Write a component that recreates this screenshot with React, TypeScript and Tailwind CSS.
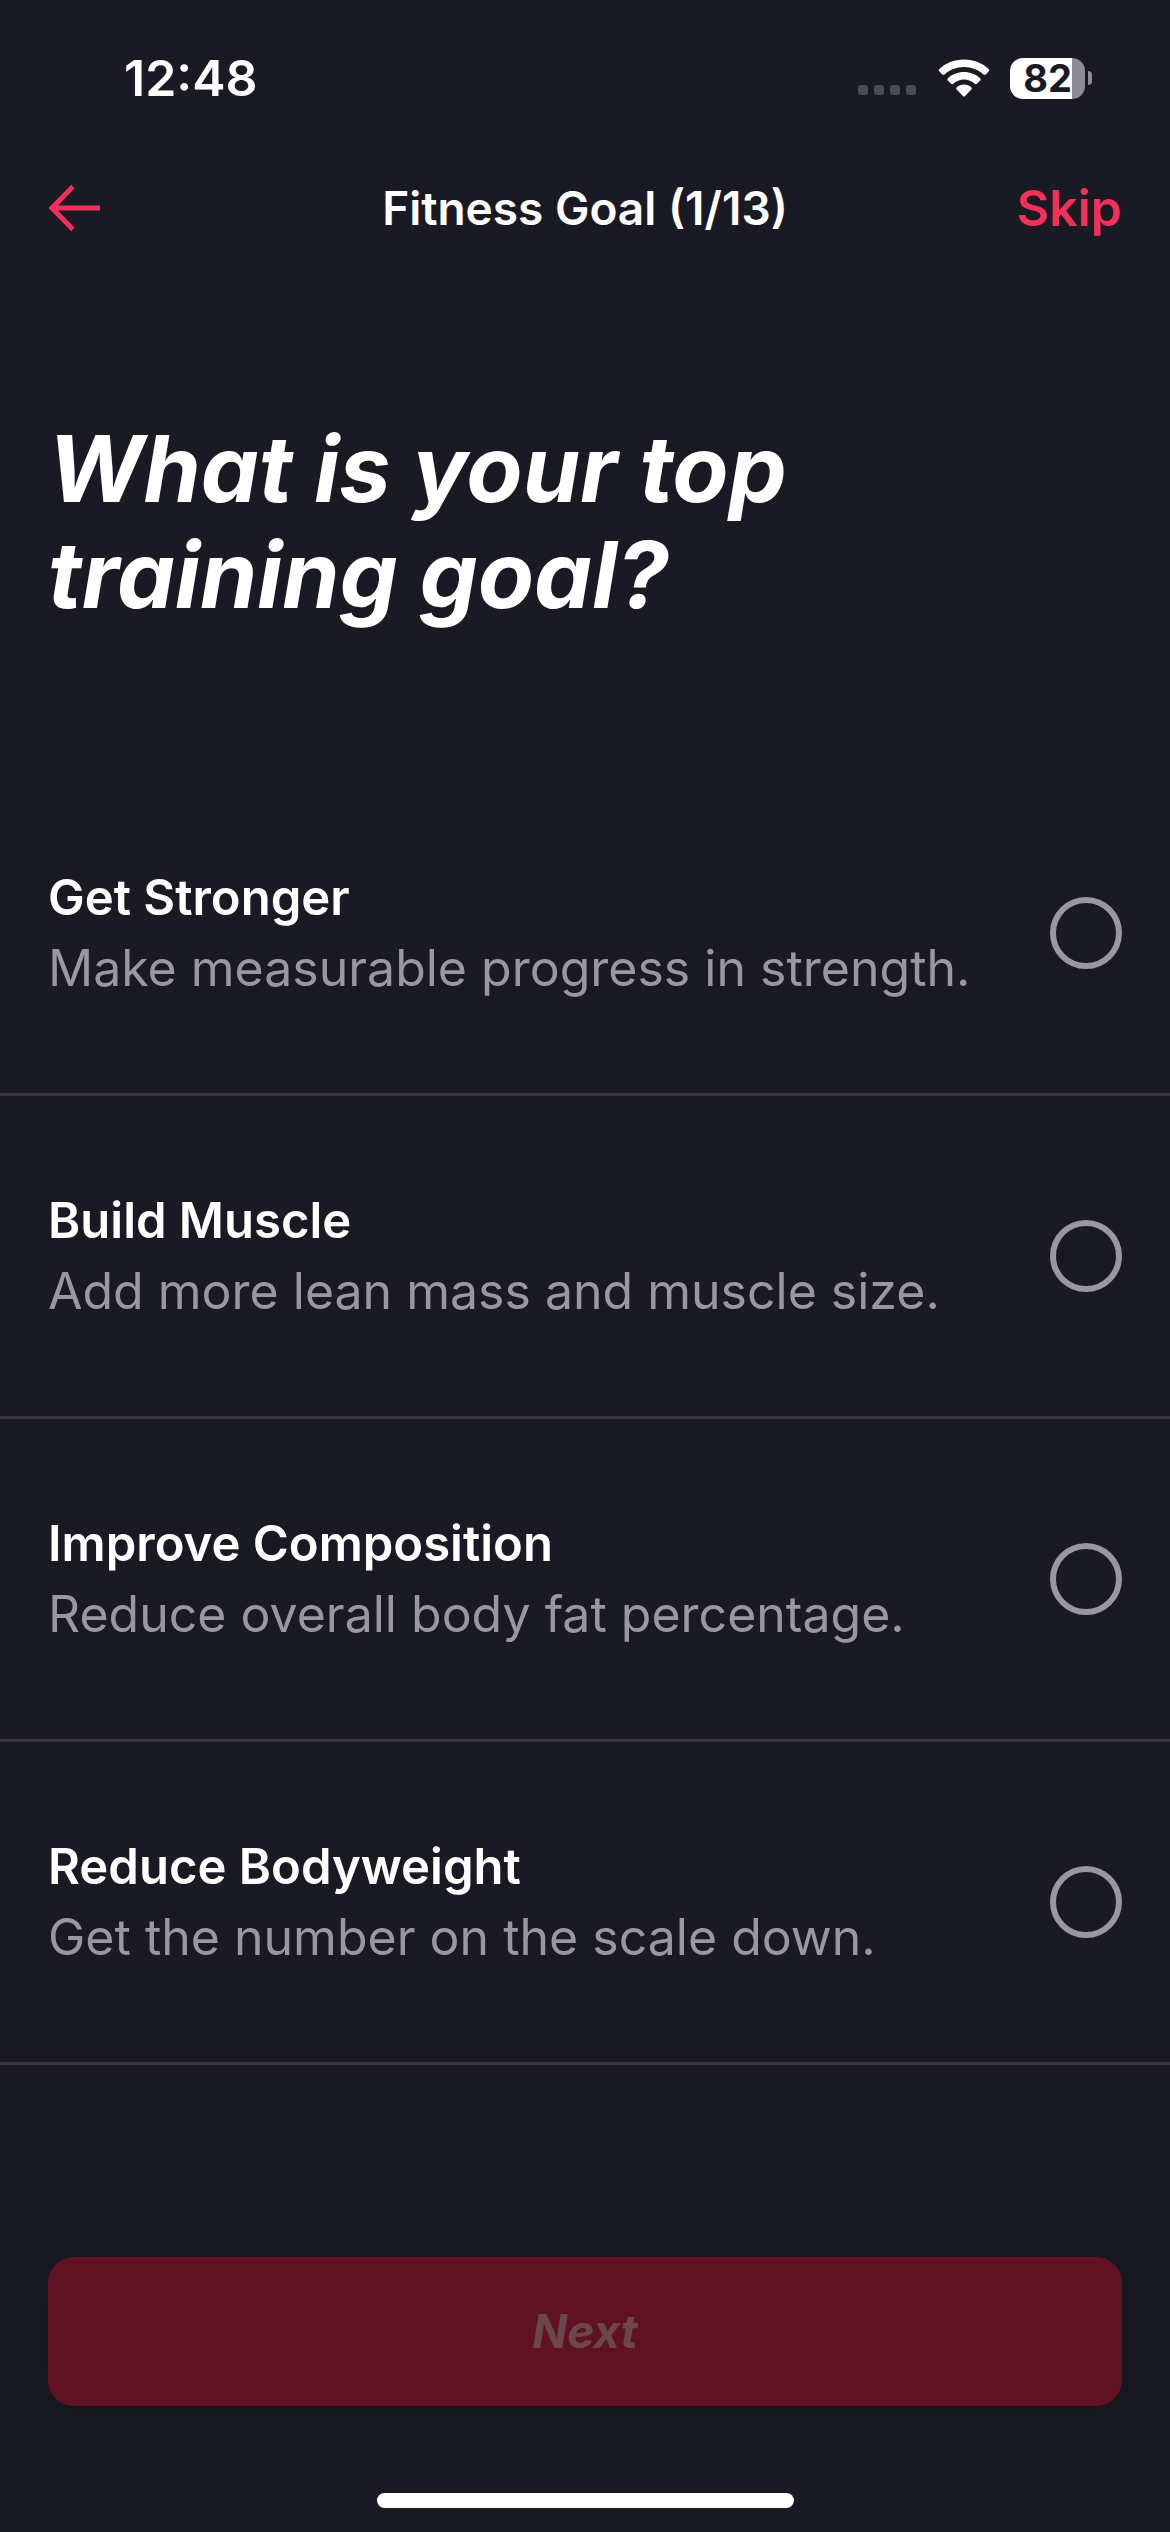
import { useState } from "react";

const GOALS = [
  { id: "strength", title: "Get Stronger", description: "Make measurable progress in strength." },
  { id: "muscle", title: "Build Muscle", description: "Add more lean mass and muscle size." },
  { id: "composition", title: "Improve Composition", description: "Reduce overall body fat percentage." },
  { id: "weight", title: "Reduce Bodyweight", description: "Get the number on the scale down." },
];

function StatusBar() {
  return (
    <div className="flex h-39 items-center justify-between pl-31 pr-[78px] text-white">
      <span className="text-[50px] leading-none font-semibold">12:48</span>
      <div className="flex items-center">
        <div className="flex gap-1.5 pt-6" aria-hidden="true">
          <span className="size-2.5 rounded-[3px] bg-[#4a4a52]" />
          <span className="size-2.5 rounded-[3px] bg-[#4a4a52]" />
          <span className="size-2.5 rounded-[3px] bg-[#4a4a52]" />
          <span className="size-2.5 rounded-[3px] bg-[#4a4a52]" />
        </div>
        <svg className="ml-5.5" width="52" height="38" viewBox="0 0 52 38" fill="none" aria-hidden="true">
          <path
            d="M26 .5C36 .5 44.500 4.200 50.700 10c.7.700.7 1.600.1 2.300l-3.100 3.200c-.6.6-1.500.6-2.200 0C40.200 10.800 33.500 8 26 8S11.800 10.800 6.500 15.500c-.7.6-1.600.6-2.200 0l-3.100-3.200c-.6-.7-.6-1.600.1-2.300C7.500 4.200 16 .5 26 .5Z"
            fill="currentColor"
          />
          <path
            d="M26 13c6.200 0 11.800 2.300 16.100 6.200.7.700.7 1.600.1 2.300l-3.200 3.300c-.7.600-1.500.6-2.200 0-2.900-2.600-6.700-4.200-10.800-4.200s-7.900 1.600-10.800 4.200c-.7.600-1.500.6-2.200 0l-3.200-3.300c-.6-.7-.6-1.600.1-2.300C14.200 15.300 19.800 13 26 13Z"
            fill="currentColor"
          />
          <path
            d="M26 25.500c2.800 0 5.300 1 7.200 2.700.8.700.8 1.600.1 2.300l-6.200 6.400c-.7.700-1.500.7-2.200 0l-6.200-6.400c-.7-.7-.7-1.600.1-2.300 1.900-1.700 4.400-2.700 7.200-2.700Z"
            fill="currentColor"
          />
        </svg>
        <div className="ml-5 flex items-center gap-[3px]">
          <div className="flex h-[41px] w-[75px] items-center justify-center rounded-[13px] bg-linear-to-r from-white from-83% to-[#8e8d94] to-83% text-[38px] leading-none font-bold text-[#191a23]">
            82
          </div>
          <span className="h-3.5 w-1 rounded-r-full bg-[#8e8d94]" />
        </div>
      </div>
    </div>
  );
}

function Header() {
  return (
    <header className="grid h-26 grid-cols-[1fr_auto_1fr] items-center px-12">
      <button className="justify-self-start text-[#f2305a]" aria-label="Back">
        <svg width="54" height="48" viewBox="0 0 54 48" fill="none" stroke="currentColor" strokeWidth="5" aria-hidden="true">
          <path d="M25 2.500 4 24l21 21.500M4 24h48" />
        </svg>
      </button>
      <h2 className="text-[46px] leading-none font-semibold text-white">Fitness Goal (1/13)</h2>
      <button className="justify-self-end text-[50px] leading-none font-semibold text-[#f2305a]">Skip</button>
    </header>
  );
}

export default function App() {
  const [selected, setSelected] = useState<string | null>(null);

  return (
    <div className="flex min-h-screen flex-col bg-[#191a23] font-['Inter',sans-serif]">
      <StatusBar />
      <Header />

      <main className="flex flex-1 flex-col">
        <h1 className="max-w-[900px] px-12 pt-39 text-[92px] leading-[106px] font-bold text-white italic">
          What is your top training goal?
        </h1>

        <div className="mt-[145px]" role="radiogroup" aria-label="Top training goal">
          {GOALS.map((goal) => (
            <label
              key={goal.id}
              className="flex cursor-pointer items-center justify-between border-b-3 border-[#373640] px-12 py-[90px]"
            >
              <span className="flex flex-col leading-[70px]">
                <span className="text-[49px] font-semibold text-white">{goal.title}</span>
                <span className="text-[50px] text-[#9997a6]">{goal.description}</span>
              </span>
              <input
                type="radio"
                name="goal"
                value={goal.id}
                checked={selected === goal.id}
                onChange={() => setSelected(goal.id)}
                className="size-18 shrink-0 appearance-none rounded-full border-6 border-[#9997a6] checked:border-[#f2305a] checked:bg-[#f2305a]"
              />
            </label>
          ))}
        </div>
      </main>

      <footer className="flex flex-col items-center px-12 pb-6">
        <button
          disabled={!selected}
          className="h-[149px] w-full rounded-[26px] bg-[#f2305a] text-[46px] font-bold text-white italic shadow-[0_6px_48px_rgba(0,0,0,0.25)] disabled:bg-[#601222] disabled:text-[#6b474c]"
        >
          Next
        </button>
        <div className="mt-[87px] h-[15px] w-[417px] rounded-full bg-white" />
      </footer>
    </div>
  );
}
